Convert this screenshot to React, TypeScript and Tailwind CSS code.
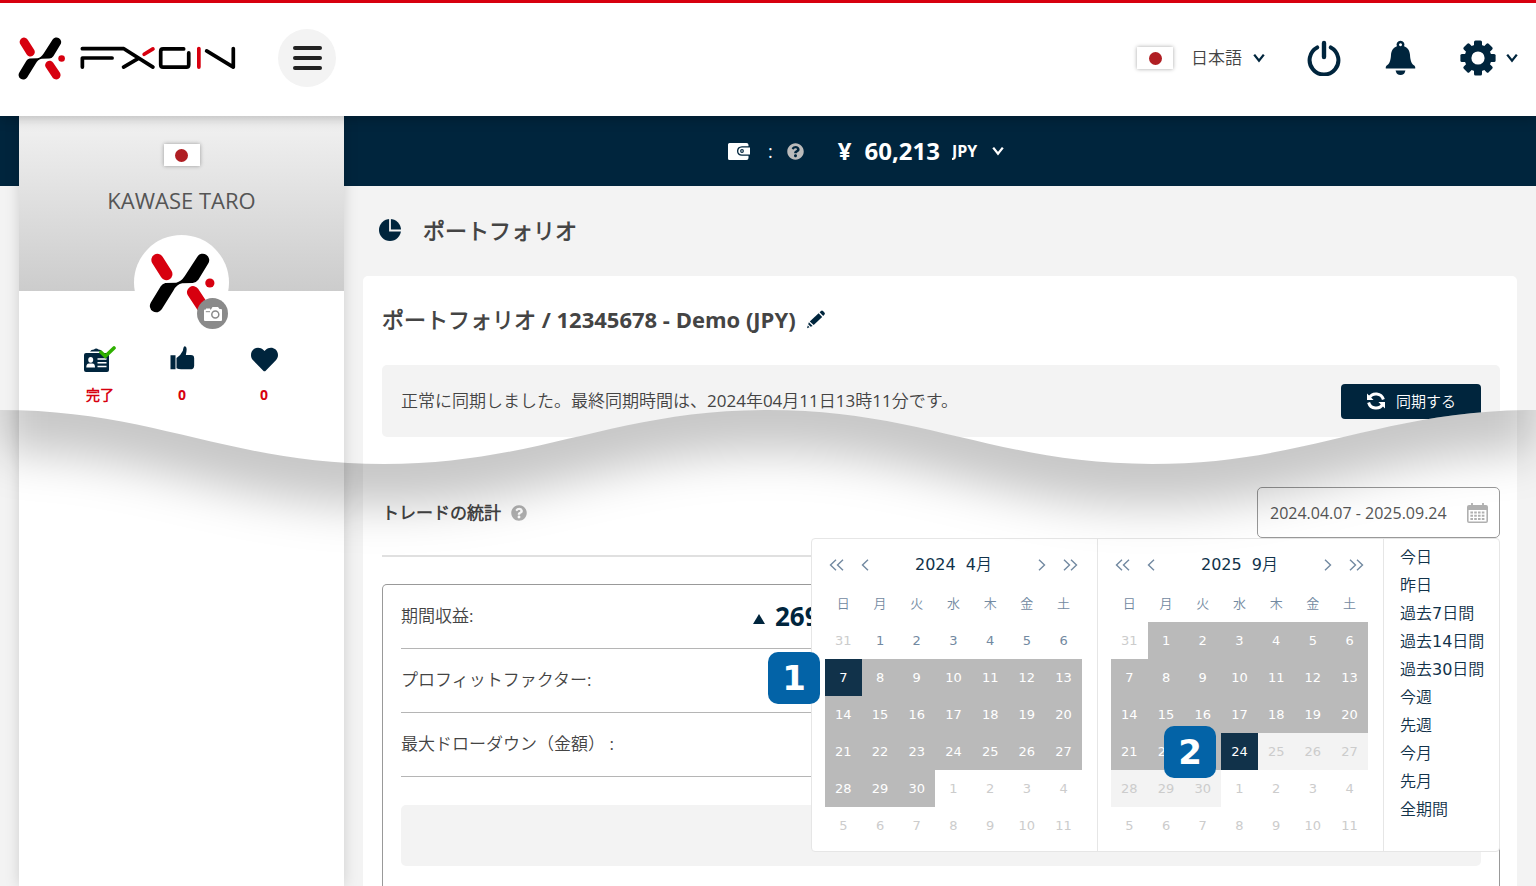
import React, { useState } from "react";
import { FaHeart, FaQuestionCircle } from "react-icons/fa";

const NAVY = "#00253d";
const RED = "#d7000f";

function LogoMark({ className }: { className: string }) {
  return (
    <svg viewBox="448 427 202 182" className={className} aria-hidden="true">
      <g fill="none" stroke={RED} strokeWidth="37" strokeLinecap="round">
        <path d="M473 448L500 491" />
        <path d="M581 546L609 588" />
      </g>
      <circle cx="632" cy="518" r="14" fill={RED} />
      <path
        fill="#000"
        d="M594 438L556 497Q545 514 530 517L497 518Q488 520 483 528L453 577A19 19 0 0 0 486 598L522 540Q532 522 548 519L580 518Q590 517 597 508L627 459A19 19 0 0 0 594 438Z"
      />
    </svg>
  );
}

function WordMark() {
  return (
    <svg viewBox="242 146 462 70" className="h-6 w-[156px]" aria-hidden="true">
      <g fill="none" strokeWidth="11" strokeLinecap="round" strokeLinejoin="round">
        <path stroke="#000" d="M249 153.5H372L458 208M249 208V181H337M371 208L415 182" />
        <path stroke={RED} d="M432 170L458 154M594 153V208" />
        <path
          stroke="#000"
          d="M549 154H488Q481 154 481 161V201Q481 208 488 208H557Q564 208 564 201V166M617 160L696 208V153"
        />
      </g>
    </svg>
  );
}

function Flag() {
  return (
    <span className="flex h-[22px] w-9 items-center justify-center bg-white shadow-[0_0_4px_rgba(0,0,0,0.35)]">
      <span className="size-[13px] rounded-full bg-[#b01e23]" />
    </span>
  );
}

function ChevronDown({ className = "" }: { className?: string }) {
  return (
    <svg viewBox="0 0 12 10" className={`h-[10px] w-3 ${className}`} aria-hidden="true">
      <path d="M1.2 1.6L6 7.6L10.8 1.6" fill="none" stroke="currentColor" strokeWidth="2.3" />
    </svg>
  );
}

function PowerIcon() {
  return (
    <svg viewBox="0 0 34 36" className="h-9 w-[34px]" aria-hidden="true">
      <g fill="none" stroke={NAVY} strokeLinecap="round" strokeWidth="4">
        <path d="M10.2 7.4A14.4 14.4 0 1 0 23.8 7.4" />
        <path d="M17 3V17" strokeWidth="4.4" />
      </g>
    </svg>
  );
}

function BellIcon() {
  return (
    <svg viewBox="796 60 94 110" className="h-9 w-[31px]" aria-hidden="true">
      <path
        fill={NAVY}
        fillRule="evenodd"
        d="M843 62a12 12 0 0 1 11 17C867 84 871 94 872 105C873 124 877 133 886 139Q889 142 888 147H798Q797 142 800 139C809 133 813 124 814 105C815 94 819 84 832 79A12 12 0 0 1 843 62ZM843 70a4.500 4.500 0 1 0 0.100 0Z"
      />
      <path fill={NAVY} d="M828 153H858Q855 167 843 167Q831 167 828 153Z" />
    </svg>
  );
}

function GearIcon() {
  return (
    <svg viewBox="-18 -18 36 36" className="size-9" aria-hidden="true">
      <g fill={NAVY}>
        {[0, 45, 90, 135].map((a) => (
          <rect key={a} x="-4" y="-17.600" width="8" height="35.200" rx="1.500" transform={`rotate(${a})`} />
        ))}
        <circle r="13.500" />
      </g>
      <circle r="6.600" fill="#fff" />
    </svg>
  );
}

function WalletIcon() {
  return (
    <svg viewBox="0 0 22 17" className="h-[17px] w-[22px]" aria-hidden="true">
      <path fill="#fff" d="M1.500 0H18.500Q20.500 0 20.500 2V3.200H14Q9 3.500 9 8Q9 12.600 14 12.800H20.500V15Q20.500 17 18.500 17H1.500Q0 17 0 15.500V1.500Q0 0 1.500 0Z" />
      <path fill="#fff" d="M14 4.400H22V11.600H14Q10.300 11.300 10.300 8Q10.300 4.700 14 4.400Z" />
      <circle cx="14" cy="8" r="1.900" fill={NAVY} />
      <circle cx="14" cy="8" r="0.800" fill="#fff" />
    </svg>
  );
}

function PieIcon() {
  return (
    <svg viewBox="0 0 22 22" className="size-[22px]" aria-hidden="true">
      <circle cx="11" cy="11" r="11" fill={NAVY} />
      <path d="M11 0V11.500H22" fill="none" stroke="#f3f3f3" strokeWidth="1.800" />
    </svg>
  );
}

function PencilIcon() {
  return (
    <svg viewBox="0 0 20 20" className="size-5" aria-hidden="true">
      <g fill={NAVY}>
        <path d="M13.600 2.200L15 0.900Q16 0.200 17 1L18.600 2.700Q19.300 3.600 18.500 4.600L17.200 5.900Z" />
        <path d="M12.600 3.200L16.200 6.900L7.700 15L3.800 11.400Z" />
        <path d="M2.900 12.300L6.600 15.900L4.700 16.800L2.200 14.300Z" />
        <path d="M1.800 15.600L3.500 17.300L1 18.200Z" />
      </g>
    </svg>
  );
}

function CameraIcon() {
  return (
    <svg viewBox="0 0 18 14" className="h-[14px] w-[18px]" aria-hidden="true">
      <path fill="#fff" d="M1 2.500H2V1.500H6V2.500H7L8.500 0H14L15.500 2H17Q18 2 18 3V13Q18 14 17 14H1Q0 14 0 13V3.500Q0 2.500 1 2.500Z" />
      <circle cx="11.300" cy="7.500" r="3.500" fill="none" stroke="#8a8a8a" strokeWidth="1.500" />
      <path d="M1.800 4.700H6" stroke="#8a8a8a" strokeWidth="1" />
    </svg>
  );
}

function IdCardIcon() {
  return (
    <svg viewBox="0 0 32 27" className="h-[27px] w-8" aria-hidden="true">
      <path fill={NAVY} d="M2 7H23Q25 7 25 9V24Q25 26 23 26H2Q0 26 0 24V9Q0 7 2 7ZM6 5.500Q7 3.500 10 3.500Q12 1.500 14.500 3.500Q17 3.500 18 5.500Z" />
      <ellipse cx="6.700" cy="13.800" rx="2.500" ry="2.900" fill="#fff" />
      <path fill="#fff" d="M2.300 21.500Q2.300 17.500 5 17.500H8.400Q11 17.500 11 21.500Z" />
      <path d="M13.500 13H22.500M13.500 16.700H22.500M13.500 20.500H22.500" stroke="#fff" strokeWidth="1.500" />
      <path d="M17 6.200L21.300 10.300L30 2" fill="none" stroke="#2fb000" strokeWidth="3.600" strokeLinecap="round" />
    </svg>
  );
}

function ThumbIcon() {
  return (
    <svg viewBox="515 710 74 72" className="h-6 w-[25px]" aria-hidden="true">
      <path
        fill={NAVY}
        d="M516 738H531V780H516ZM534 746Q546 739 553 724Q555 711 559 711Q566 712 564 726L562 737H577Q587 737 587 747V769Q587 780 575 780H548Q540 780 534 777Z"
      />
    </svg>
  );
}

function SyncIcon() {
  return (
    <svg viewBox="0 0 20 20" className="size-5" aria-hidden="true">
      <g fill="none" stroke="#fff" strokeWidth="3">
        <path d="M3.200 7A7.700 7.700 0 0 1 17.400 8.500" />
        <path d="M16.800 13A7.700 7.700 0 0 1 2.600 11.500" />
      </g>
      <path fill="#fff" d="M1 2.500V9H7.600ZM19 17.500V11H12.400Z" />
    </svg>
  );
}

function CalendarIcon() {
  return (
    <svg viewBox="0 0 21 20" className="h-5 w-[21px] shrink-0" aria-hidden="true">
      <path fill="#b0b0b0" fillRule="evenodd" d="M2 2H19Q21 2 21 4V18Q21 20 19 20H2Q0 20 0 18V4Q0 2 2 2ZM1.600 7V18.400H19.400V7Z" />
      <path stroke="#b0b0b0" strokeWidth="1.800" d="M5 0V4M16 0V4" />
      <path stroke="#b0b0b0" strokeWidth="2" strokeDasharray="2.600 1.200" d="M3.400 9.500H17.800M3.400 12.700H17.800M3.400 16H17.800" />
    </svg>
  );
}

function Arrow({ double = false, right = false }: { double?: boolean; right?: boolean }) {
  return (
    <svg
      viewBox={double ? "0 0 15 12" : "0 0 8 12"}
      className={`${double ? "w-[15px]" : "w-2"} h-3 ${right ? "rotate-180" : ""}`}
      aria-hidden="true"
    >
      <path
        d={double ? "M7 0.800L1.500 6L7 11.200M14 0.800L8.500 6L14 11.200" : "M7 0.800L1.500 6L7 11.200"}
        fill="none"
        stroke="#7289a1"
        strokeWidth="1.400"
      />
    </svg>
  );
}

type Kind = "outside" | "plain" | "range" | "edge" | "rest";

const dayStyle: Record<Kind, string> = {
  outside: "text-[#cccccc]",
  plain: "text-[#7289a1]",
  range: "bg-[#bababa] text-white",
  edge: "bg-[#11324a] text-white",
  rest: "bg-[#f3f3f3] text-[#cccccc]",
};

const weekdays = ["日", "月", "火", "水", "木", "金", "土"];

function buildMonth(days: number, kindOf: (day: number) => Kind) {
  const cells: { day: number; kind: Kind }[] = [{ day: 31, kind: "outside" }];
  for (let d = 1; d <= days; d++) cells.push({ day: d, kind: kindOf(d) });
  for (let d = 1; cells.length < 42; d++) cells.push({ day: d, kind: "outside" });
  return Array.from({ length: 6 }, (_, r) => cells.slice(r * 7, r * 7 + 7));
}

const april = buildMonth(30, (d) => (d < 7 ? "plain" : d === 7 ? "edge" : "range"));
const september = buildMonth(30, (d) => (d < 24 ? "range" : d === 24 ? "edge" : "rest"));

function Month({ year, month, rows }: { year: string; month: string; rows: { day: number; kind: Kind }[][] }) {
  return (
    <div className="w-[286px] border-r border-[#e6e6e6] py-[7px] pr-[15px] pl-[13px]">
      <div className="mb-[2px] flex h-[37px] items-center px-1">
        <button type="button" aria-label="前年" className="mr-[17px]"><Arrow double /></button>
        <button type="button" aria-label="前月"><Arrow /></button>
        <span className="flex-1 text-center text-base text-[#11324a]">
          {year}&nbsp; {month}
        </span>
        <button type="button" aria-label="翌月"><Arrow right /></button>
        <button type="button" aria-label="翌年" className="ml-[17px]"><Arrow double right /></button>
      </div>
      <table className="w-full table-fixed border-collapse text-[13px]">
        <thead>
          <tr>
            {weekdays.map((w) => (
              <th key={w} scope="col" className="h-[37px] p-0 text-center font-normal text-[#7289a1]">{w}</th>
            ))}
          </tr>
        </thead>
        <tbody>
          {rows.map((row, r) => (
            <tr key={r}>
              {row.map((c, i) => (
                <td key={i} className={`h-[37px] p-0 ${dayStyle[c.kind]}`}>
                  <button type="button" className="block h-[37px] w-full text-center">{c.day}</button>
                </td>
              ))}
            </tr>
          ))}
        </tbody>
      </table>
    </div>
  );
}

const presets = ["今日", "昨日", "過去7日間", "過去14日間", "過去30日間", "今週", "先週", "今月", "先月", "全期間"];

function RangePicker() {
  return (
    <div className="absolute top-full right-0 z-10 flex rounded border border-[#e6e6e6] bg-white font-['DejaVu_Sans','Noto_Sans_CJK_JP_DemiLight','Noto_Sans_CJK_JP',sans-serif]">
      <Month year="2024" month="4月" rows={april} />
      <Month year="2025" month="9月" rows={september} />
      <ul className="w-[115px] pt-[5px] pl-4">
        {presets.map((p) => (
          <li key={p}>
            <button type="button" className="block h-7 text-base whitespace-nowrap text-[#11324a]">{p}</button>
          </li>
        ))}
      </ul>
      <StepBadge place="top-[113px] left-[-44px]">1</StepBadge>
      <StepBadge place="top-[187px] left-[352px]">2</StepBadge>
    </div>
  );
}

function StepBadge({ place, children }: { place: string; children: React.ReactNode }) {
  return (
    <span className={`absolute flex size-[52px] items-center justify-center rounded-[10px] bg-[#0363a7] text-[34px] font-bold text-white ${place}`}>
      {children}
    </span>
  );
}

const WAVE = "C155 0 229 54 384 54S613 0 768 0S997 54 1152 54S1381 0 1536 0";

function WaveCut() {
  return (
    <svg
      viewBox="0 0 1536 200"
      preserveAspectRatio="none"
      className="pointer-events-none absolute top-[410px] left-0 z-20 h-[200px] w-full"
      aria-hidden="true"
    >
      <defs>
        <clipPath id="below-wave">
          <path d={`M0 0${WAVE}V200H0Z`} />
        </clipPath>
        <filter id="wave-blur" filterUnits="userSpaceOnUse" x="-100" y="-200" width="1736" height="500">
          <feGaussianBlur stdDeviation="23" />
        </filter>
      </defs>
      <g clipPath="url(#below-wave)">
        <rect x="363" y="0" width="1154" height="60" fill="#fff" />
        <path
          d={`M0 0${WAVE}V-160H0Z`}
          transform="translate(0 42)"
          fill="#000"
          fillOpacity="0.22"
          filter="url(#wave-blur)"
        />
      </g>
    </svg>
  );
}

function Header() {
  return (
    <header className="relative z-10 flex h-[116px] items-center border-t-[3px] border-[#d7000f] bg-white px-[18px] pb-[3px] shadow-[0_2px_12px_rgba(0,0,0,0.25)]">
      <a href="#home" aria-label="FXON" className="flex items-center gap-[14px]">
        <LogoMark className="h-[43px] w-12" />
        <WordMark />
      </a>
      <button type="button" aria-label="メニュー" className="ml-[42px] flex size-[58px] flex-col items-center justify-center gap-[6px] rounded-full bg-[#f3f3f3]">
        <span className="h-1 w-[29px] rounded-full bg-[#222]" />
        <span className="h-1 w-[29px] rounded-full bg-[#222]" />
        <span className="h-1 w-[29px] rounded-full bg-[#222]" />
      </button>
      <div className="ml-auto flex items-center text-[#00253d]">
        <Flag />
        <select aria-label="言語" className="ml-[18px] w-[54px] appearance-none bg-transparent text-[17px] font-[350] text-[#444]">
          <option>日本語</option>
        </select>
        <ChevronDown className="ml-2" />
        <button type="button" aria-label="ログアウト" className="ml-[42px]"><PowerIcon /></button>
        <button type="button" aria-label="お知らせ" className="ml-11"><BellIcon /></button>
        <button type="button" aria-label="設定" className="ml-11 flex items-center gap-[10px]">
          <GearIcon />
          <ChevronDown />
        </button>
      </div>
    </header>
  );
}

function Sidebar() {
  return (
    <aside className="relative -mt-[70px] ml-[19px] w-[325px] shrink-0 bg-white shadow-[0_0_14px_rgba(0,0,0,0.15)]">
      <div className="flex h-[175px] flex-col items-center bg-linear-to-b from-[#f2f2f2] to-[#cccccc] pt-7">
        <Flag />
        <p className="mt-5 text-[22px] leading-[28px] text-[#555]">KAWASE TARO</p>
      </div>
      <div className="relative mx-auto -mt-14 flex size-[95px] items-center justify-center rounded-full bg-white pl-[2px]">
        <LogoMark className="h-[60px] w-[67px]" />
        <button type="button" aria-label="写真を変更" className="absolute right-[1px] bottom-[1px] flex size-[31px] items-center justify-center rounded-full bg-[#8a8a8a]">
          <CameraIcon />
        </button>
      </div>
      <ul className="mt-4 grid grid-cols-3 pr-[39px] pl-10 text-sm font-bold text-[#d7000f]">
        <li className="flex flex-col items-center gap-[11px]">
          <span className="flex h-7 items-start"><IdCardIcon /></span>
          <span>完了</span>
        </li>
        <li className="flex flex-col items-center gap-[11px]">
          <span className="flex h-7 items-start"><ThumbIcon /></span>
          <span>0</span>
        </li>
        <li className="flex flex-col items-center gap-[11px]">
          <span className="flex h-7 items-start"><FaHeart size={27} color={NAVY} /></span>
          <span>0</span>
        </li>
      </ul>
    </aside>
  );
}

const stats = [
  { label: "期間収益:", value: "269" },
  { label: "プロフィットファクター:" },
  { label: "最大ドローダウン（金額） :" },
];

function Statistics() {
  const [range, setRange] = useState("2024.04.07 - 2025.09.24");
  return (
    <section className="mt-[50px] flex flex-1 flex-col">
      <div className="flex h-[51px] items-center justify-between">
        <h3 className="flex items-center gap-[10px] text-[17px] font-bold text-[#444]">
          トレードの統計
          <FaQuestionCircle size={16} color="#b0b0b0" />
        </h3>
        <div className="relative">
          <label className="flex h-[51px] w-[243px] items-center rounded-[5px] border border-[#999] bg-white pr-[11px] pl-3">
            <input
              aria-label="期間"
              value={range}
              onChange={(e) => setRange(e.target.value)}
              className="min-w-0 flex-1 bg-transparent text-base text-[#555] outline-none"
            />
            <CalendarIcon />
          </label>
          <RangePicker />
        </div>
      </div>
      <hr className="mt-[17px] border-t-2 border-[#e0e0e0]" />
      <div className="mt-[27px] flex-1 rounded-t-[5px] border border-b-0 border-[#999] px-[18px]">
        <dl>
          {stats.map((s) => (
            <div key={s.label} className="flex h-16 items-center border-b border-[#b5b5b5]">
              <dt className="w-[352px] pb-[2px] text-[17px] text-[#444]">{s.label}</dt>
              <dd className="flex items-center gap-[10px] text-[26px] font-bold text-[#00253d]">
                {s.value && (
                  <>
                    <svg viewBox="0 0 12 10" className="mt-1 h-[10px] w-3" aria-hidden="true">
                      <path d="M6 0L12 10H0Z" fill="currentColor" />
                    </svg>
                    {s.value}
                  </>
                )}
              </dd>
            </div>
          ))}
        </dl>
        <div className="mt-7 mb-5 h-[61px] rounded-[5px] bg-[#f3f3f3]" />
      </div>
    </section>
  );
}

export default function App() {
  return (
    <div className="relative flex min-h-screen flex-col overflow-hidden bg-[#f3f3f3] font-['Open_Sans','Noto_Sans_CJK_JP_DemiLight','Noto_Sans_CJK_JP',sans-serif]">
      <Header />
      <div className="flex h-[70px] items-center bg-[#00253d] pl-[728px] text-white">
        <WalletIcon />
        <span className="ml-[18px] text-lg">:</span>
        <FaQuestionCircle size={17} color="#bbbbbb" className="ml-[14px]" />
        <span className="ml-[34px] flex gap-[13px] text-2xl font-bold">
          <span>¥</span>
          <span>60,213</span>
        </span>
        <select aria-label="通貨" className="ml-3 w-7 appearance-none bg-transparent text-base font-bold text-white">
          <option>JPY</option>
        </select>
        <ChevronDown className="ml-3" />
      </div>
      <div className="flex flex-1">
        <Sidebar />
        <main className="mr-[19px] ml-[19px] flex min-w-0 flex-1 flex-col">
          <h1 className="flex h-[90px] items-center gap-[22px] pb-[2px] pl-4 text-[22px] font-bold text-[#444]">
            <PieIcon />
            ポートフォリオ
          </h1>
          <div className="flex flex-1 flex-col rounded-t-[5px] bg-white pr-[17px] pl-[19px]">
            <h2 className="flex h-[89px] items-center gap-[10px] pb-[2px] text-[22px] font-bold text-[#444]">
              ポートフォリオ / 12345678 - Demo (JPY)
              <button type="button" aria-label="編集"><PencilIcon /></button>
            </h2>
            <div className="flex h-[72px] items-center justify-between rounded-[5px] bg-[#f3f3f3] px-[19px]">
              <p className="text-[17px] text-[#444]">
                正常に同期しました。最終同期時間は、2024年04月11日13時11分です。
              </p>
              <button type="button" className="flex h-[35px] w-[140px] items-center justify-center gap-[10px] rounded bg-[#00253d] text-[15px] text-white">
                <SyncIcon />
                同期する
              </button>
            </div>
            <Statistics />
          </div>
        </main>
      </div>
      <WaveCut />
    </div>
  );
}
